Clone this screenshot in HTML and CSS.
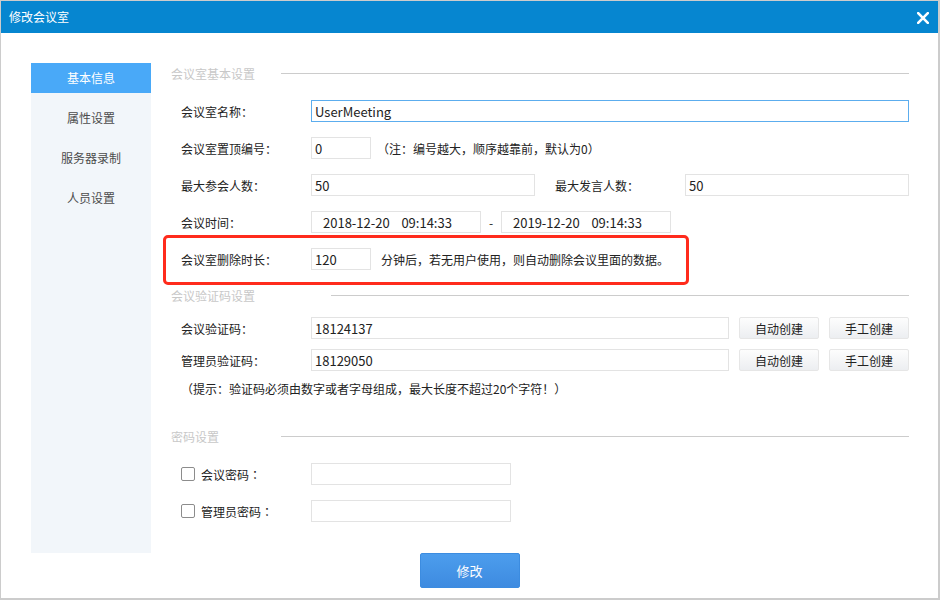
FILE: index.html
```html
<!DOCTYPE html>
<html lang="zh-CN">
<head>
<meta charset="utf-8">
<title>修改会议室</title>
<link rel="stylesheet" href="styles.css">
</head>
<body>
<div class="dialog">
  <div class="titlebar">
    <span class="title">修改会议室</span>
    <svg class="close" width="12" height="12" viewBox="0 0 12 12"><path d="M1.2 1.2 L10.8 10.8 M10.8 1.2 L1.2 10.8" stroke="#fff" stroke-width="2.6" stroke-linecap="square" fill="none"/></svg>
  </div>
  <div class="body">
    <nav class="sidebar">
      <div class="nav-item active">基本信息</div>
      <div class="nav-item">属性设置</div>
      <div class="nav-item">服务器录制</div>
      <div class="nav-item">人员设置</div>
    </nav>
    <div class="content">
      <div class="section-head"><span class="section-title">会议室基本设置</span><span class="section-line"></span></div>

      <div class="row mt17">
        <span class="lbl">会议室名称<span class="colon">：</span></span>
        <input class="field field-focus w598" value="UserMeeting">
      </div>
      <div class="row mt15">
        <span class="lbl">会议室置顶编号<span class="colon">：</span></span>
        <input class="field w60" value="0">
        <span class="note">（注<span class="colon">：</span>编号越大，顺序越靠前，默认为0）</span>
      </div>
      <div class="row mt15">
        <span class="lbl">最大参会人数<span class="colon">：</span></span>
        <input class="field w224" value="50">
        <span class="lbl lbl-second">最大发言人数<span class="colon">：</span></span>
        <input class="field w224" value="50">
      </div>
      <div class="row mt15">
        <span class="lbl">会议时间<span class="colon">：</span></span>
        <input class="field field-time w170" value="2018-12-20    09:14:33">
        <span class="dash">-</span>
        <input class="field field-time w170" value="2019-12-20    09:14:33">
      </div>
      <div class="row mt15 highlighted">
        <span class="lbl">会议室删除时长<span class="colon">：</span></span>
        <input class="field w60" value="120">
        <span class="note note-tight">分钟后，若无用户使用，则自动删除会议里面的数据。</span>
      </div>

      <div class="section-head mt15"><span class="section-title wide">会议验证码设置</span><span class="section-line"></span></div>

      <div class="row mt12">
        <span class="lbl">会议验证码<span class="colon">：</span></span>
        <input class="field w418" value="18124137">
        <button class="btn">自动创建</button>
        <button class="btn">手工创建</button>
      </div>
      <div class="row mt10">
        <span class="lbl">管理员验证码<span class="colon">：</span></span>
        <input class="field w418" value="18129050">
        <button class="btn">自动创建</button>
        <button class="btn">手工创建</button>
      </div>
      <div class="hint">（提示<span class="colon">：</span>验证码必须由数字或者字母组成，最大长度不超过20个字符！）</div>

      <div class="section-head mt28"><span class="section-title">密码设置</span><span class="section-line"></span></div>

      <div class="row mt17">
        <label class="check-lbl"><span class="checkbox"></span>会议密码<span class="colon">：</span></label>
        <input class="field w200" value="">
      </div>
      <div class="row mt15">
        <label class="check-lbl"><span class="checkbox"></span>管理员密码<span class="colon">：</span></label>
        <input class="field w200" value="">
      </div>
    </div>
  </div>
  <div class="footer">
    <button class="btn-primary">修改</button>
  </div>
</div>
</body>
</html>
```

FILE: styles.css
```css
* { box-sizing: border-box; }
html, body {
  margin: 0;
  padding: 0;
  width: 940px;
  height: 600px;
  background: #ffffff;
  font-family: "Noto Sans CJK SC", "Microsoft YaHei", sans-serif;
  font-size: 12px;
  color: #222222;
  text-spacing-trim: space-all;
}
.dialog {
  width: 940px;
  height: 600px;
  border: 1px solid #cccccc;
  border-right-width: 2px;
  border-bottom-width: 2px;
  display: flex;
  flex-direction: column;
  background: #ffffff;
}
.titlebar {
  height: 32px;
  background: #0686d0;
  display: flex;
  align-items: center;
  justify-content: space-between;
  padding: 0 9px 0 8px;
  flex: none;
}
.title {
  color: #ffffff;
  font-size: 12px;
  line-height: 32px;
}
.close { display: block; margin-top: 1px; }

.body {
  display: flex;
  padding: 30px 0 0 30px;
  flex: none;
}
.sidebar {
  width: 120px;
  height: 490px;
  background: #f2f6fa;
  display: flex;
  flex-direction: column;
  gap: 10px;
  flex: none;
}
.nav-item {
  height: 30px;
  line-height: 30px;
  text-align: center;
  color: #4c4c4c;
  font-size: 12px;
}
.nav-item.active {
  background: #49a9f8;
  color: #ffffff;
}

.content {
  margin-left: 20px;
  width: 738px;
  display: flex;
  flex-direction: column;
}
.section-head {
  height: 20px;
  display: flex;
  align-items: center;
}
.section-title {
  width: 110px;
  color: #c8c8c8;
  font-size: 12px;
  flex: none;
}
.section-title.wide { width: 160px; }
.section-line {
  flex: 1;
  height: 1px;
  background: #cccccc;
}

.row {
  height: 22px;
  display: flex;
  align-items: center;
  padding-left: 10px;
}
.mt10 { margin-top: 10px; }
.mt12 { margin-top: 12px; }
.mt15 { margin-top: 15px; }
.mt17 { margin-top: 17px; }
.mt28 { margin-top: 28px; }

.lbl {
  width: 130px;
  flex: none;
  color: #222222;
}
.lbl-second { margin-left: 20px; }
.colon {
  font-family: "Noto Sans CJK TC", "Noto Sans CJK SC", sans-serif;
}

.field {
  height: 22px;
  border: 1px solid #e3e3e3;
  padding: 0 3px;
  font-family: "Noto Sans CJK SC", "Microsoft YaHei", sans-serif;
  font-size: 13px;
  color: #222222;
  background: #ffffff;
  outline: none;
  flex: none;
}
.field-focus { border-color: #5cadee; }
.field-time { padding-left: 11px; }
.w60 { width: 60px; }
.w170 { width: 170px; }
.w200 { width: 200px; }
.w224 { width: 224px; }
.w418 { width: 418px; }
.w598 { width: 598px; }

.dash {
  width: 20px;
  text-align: center;
  flex: none;
}
.note { margin-left: 6px; }
.note-tight { margin-left: 10px; }

.highlighted { position: relative; }
.highlighted::after {
  content: "";
  position: absolute;
  left: -8px;
  top: -13px;
  width: 520px;
  height: 44px;
  border: 3px solid #ff2b1c;
  border-radius: 5px;
  pointer-events: none;
}

.btn {
  width: 80px;
  height: 22px;
  margin-left: 10px;
  border: 1px solid #e6e6e6;
  border-radius: 2px;
  background: linear-gradient(#fdfdfd, #eceef1);
  font-family: "Noto Sans CJK SC", "Microsoft YaHei", sans-serif;
  font-size: 12px;
  color: #222222;
  padding: 0;
  flex: none;
}

.hint {
  margin-top: 9px;
  height: 18px;
  line-height: 18px;
  padding-left: 10px;
  white-space: nowrap;
}

.check-lbl {
  width: 130px;
  flex: none;
  display: flex;
  align-items: center;
}
.checkbox {
  width: 14px;
  height: 14px;
  border: 1px solid #8c8c8c;
  border-radius: 2px;
  margin-right: 6px;
  background: #ffffff;
  flex: none;
}

.footer {
  display: flex;
  justify-content: center;
}
.btn-primary {
  width: 100px;
  height: 35px;
  border: 1px solid #3c8ce0;
  border-radius: 2px;
  background: linear-gradient(#4c9ded, #3e8be0);
  color: #ffffff;
  font-family: "Noto Sans CJK SC", "Microsoft YaHei", sans-serif;
  font-size: 13px;
  padding: 0;
}
```
